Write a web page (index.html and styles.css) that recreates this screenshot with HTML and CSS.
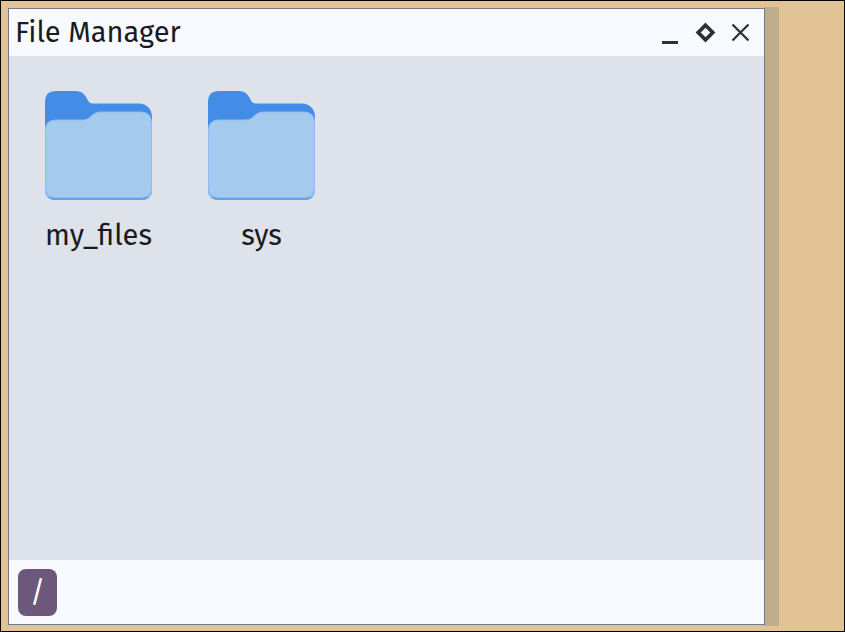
FILE: index.html
```html
<!DOCTYPE html>
<html lang="en">
<head>
<meta charset="utf-8">
<title>File Manager</title>
<link rel="stylesheet" href="styles.css">
</head>
<body>
<svg class="defs" aria-hidden="true">
  <symbol id="folder" viewBox="0 0 108 110">
    <path fill="#438de7" d="M0 98V11Q0 0 11 0H31Q38 0 41 6C44 11 44 12.500 49 12.500H93Q107 13 107 27V98Q107 109 96 109H11Q0 109 0 98Z"/>
    <path fill="#8fbcef" d="M0 60H107V98Q107 109 96 109H11Q0 109 0 98Z"/>
    <path fill="#649fed" d="M3 106H104Q101 109 96 109H11Q6 109 3 106Z"/>
    <path fill="#a4caee" stroke="#8fbcef" stroke-width="1" d="M.5 39Q.5 29 11 29H38C46 29 46 21 56 21H96Q106.500 21 106.500 32V96Q106.500 106 97 106.500H10Q.5 106 .5 96Z"/>
  </symbol>
</svg>
<main class="window">
  <header class="titlebar">
    <h1 class="title">File Manager</h1>
    <div class="controls">
      <button type="button" aria-label="Minimize"><svg viewBox="0 0 20 20"><path d="M2 19.500H18" stroke="#2f3036" stroke-width="3"/></svg></button>
      <button type="button" aria-label="Maximize"><svg viewBox="0 0 20 20"><path fill="none" d="M10.500 2.200L17.800 9.500L10.500 16.800L3.200 9.500Z" stroke="#2f3036" stroke-width="3.700"/></svg></button>
      <button type="button" aria-label="Close"><svg viewBox="0 0 20 20"><path d="M2.500 1.500L18.500 17.500M18.500 1.500L2.500 17.500" stroke="#2f3036" stroke-width="2.300"/></svg></button>
    </div>
  </header>
  <section class="files">
    <a class="file" href="#my_files"><svg class="folder"><use href="#folder"/></svg><span>my_files</span></a>
    <a class="file" href="#sys"><svg class="folder"><use href="#folder"/></svg><span>sys</span></a>
  </section>
  <footer class="pathbar"><button class="crumb" type="button">/</button></footer>
</main>
</body>
</html>
```
FILE: styles.css
```css
* {
  box-sizing: border-box;
}

body {
  display: flex;
  height: 100vh;
  margin: 0;
  padding: 7px 79px 6px 7px;
  border: 1px solid #000;
  background: #e2c395;
  color: #191b20;
  font: 29px/36px "Fira Sans", "Noto Sans", sans-serif;
}

.defs {
  position: absolute;
  width: 0;
  height: 0;
}

.window {
  position: relative;
  display: flex;
  flex: 1;
  flex-direction: column;
  border: 1px solid #747985;
  background: #f9faff;
}

/* Flat shadow along the right edge, behind the window. */
.window::after {
  content: "";
  position: absolute;
  z-index: -1;
  top: -2px;
  bottom: -2px;
  left: 100%;
  width: 15px;
  background: #bfac8d;
}

.titlebar {
  display: flex;
  align-items: center;
  justify-content: space-between;
  height: 47px;
  padding: 0 14px 0 6px;
}

.title {
  margin: 0;
  font-size: 29px;
  font-weight: 400;
}

.controls {
  display: flex;
  gap: 15px;
}

.controls button {
  width: 20px;
  height: 20px;
  padding: 0;
  border: 0;
  background: none;
}

.controls svg {
  display: block;
  width: 20px;
  height: 20px;
  overflow: visible;
}

.files {
  display: flex;
  flex: 1;
  flex-wrap: wrap;
  align-content: flex-start;
  gap: 28px;
  padding: 35px 22px;
  background: #dee2ea;
}

.file {
  display: flex;
  flex-direction: column;
  align-items: center;
  gap: 17px;
  width: 135px;
  color: inherit;
  text-decoration: none;
}

.folder {
  width: 108px;
  height: 110px;
}

.pathbar {
  padding: 9px 9px 8px;
}

.crumb {
  display: block;
  width: 39px;
  height: 47px;
  padding: 0;
  border: 0;
  border-radius: 8px;
  background: #6b587b;
  color: #fff;
  font: inherit;
}
```
